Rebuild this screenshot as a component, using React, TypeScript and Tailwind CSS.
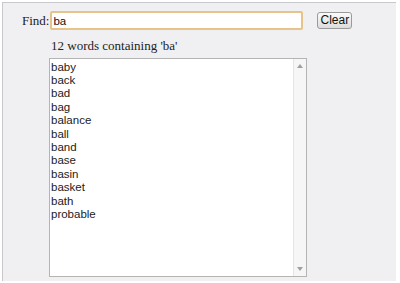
import { useState } from "react";

const WORDS = ["baby", "back", "bad", "bag", "balance", "ball", "band", "base", "basin", "basket", "bath", "probable"];

export default function App() {
  const [query, setQuery] = useState("ba");
  const matches = WORDS.filter((w) => w.includes(query));

  return (
    <div className="h-[283px] w-[400px] bg-white pl-[2px] pt-[2px]">
      <div className="h-[279px] w-[394px] border-l border-t border-[#c8c8cc] bg-[#f0f0f2] pl-[19px] pt-[8px] font-['Liberation_Serif',serif] text-[13px] text-[#222]">
        <div className="flex items-center">
          <label className="mr-[1px]">Find:</label>
          <input
            value={query}
            onChange={(e) => setQuery(e.target.value)}
            className="h-[19px] w-[253px] rounded-[2px] border-2 border-[#e5c38a] bg-white px-[1px] font-['Liberation_Sans',sans-serif] text-[11.5px] text-[#111] outline-none"
          />
          <button
            type="button"
            onClick={() => setQuery("")}
            className="ml-[14px] h-[17px] rounded-[3px] border border-[#9a9a9a] bg-gradient-to-b from-[#fbfbfb] to-[#dcdcdc] px-[2px] font-['Liberation_Sans',sans-serif] text-[12px] leading-[15px] text-[#111]"
          >
            Clear
          </button>
        </div>
        <div className="ml-[29px] mt-[7px] leading-[15px]">
          {matches.length} words containing '{query}'
        </div>
        <div className="ml-[27px] mt-[5px] flex h-[219px] w-[258px] border border-[#b4b4b4] bg-white">
          <ul className="flex-1 px-[1px] pt-[2px] font-['Liberation_Sans',sans-serif] text-[11.5px] leading-[13.4px] text-[#222]">
            {matches.map((w) => (
              <li key={w}>{w}</li>
            ))}
          </ul>
          <div className="flex w-[13px] flex-col items-center justify-between border-l border-[#e4e4e4] bg-[#f6f6f6] py-[5px]">
            <svg width="6" height="4" viewBox="0 0 6 4">
              <path d="M0 4 L3 0 L6 4 Z" fill="#a0a0a0" />
            </svg>
            <svg width="6" height="4" viewBox="0 0 6 4">
              <path d="M0 0 L3 4 L6 0 Z" fill="#a0a0a0" />
            </svg>
          </div>
        </div>
      </div>
    </div>
  );
}
